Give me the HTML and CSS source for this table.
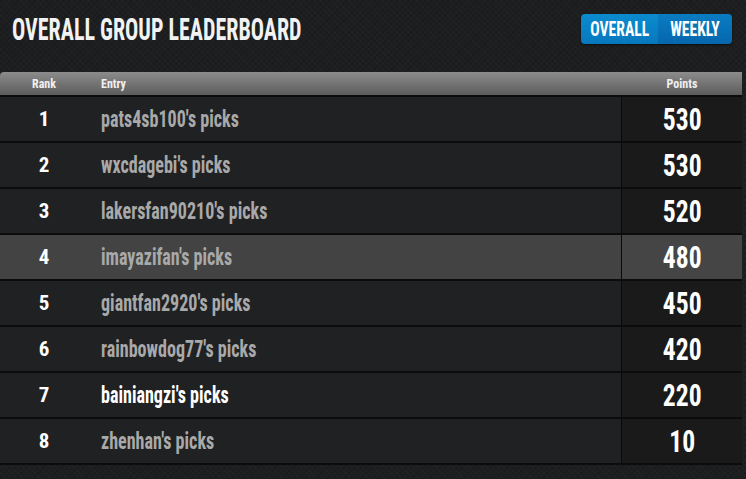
FILE: index.html
```html
<!DOCTYPE html>
<html>
<head>
<meta charset="utf-8">
<link rel="stylesheet" href="styles.css">
</head>
<body>
<div class="page">
  <header class="top">
    <h1 class="title"><span class="sq sq-title">OVERALL GROUP LEADERBOARD</span></h1>
    <div class="toggle">
      <span class="tab tab-on"><span class="sq sq-tab">OVERALL</span></span>
      <span class="tab tab-off"><span class="sq sq-tab">WEEKLY</span></span>
    </div>
  </header>
  <div class="board">
    <div class="row head">
      <div class="c-rank">Rank</div>
      <div class="c-entry">Entry</div>
      <div class="c-pts">Points</div>
    </div>
    <div class="row"><div class="c-rank">1</div><div class="c-entry"><span class="sq sq-name">pats4sb100's picks</span></div><div class="c-pts"><span class="sq sq-pts">530</span></div></div>
    <div class="row"><div class="c-rank">2</div><div class="c-entry"><span class="sq sq-name">wxcdagebi's picks</span></div><div class="c-pts"><span class="sq sq-pts">530</span></div></div>
    <div class="row"><div class="c-rank">3</div><div class="c-entry"><span class="sq sq-name">lakersfan90210's picks</span></div><div class="c-pts"><span class="sq sq-pts">520</span></div></div>
    <div class="row hl"><div class="c-rank">4</div><div class="c-entry"><span class="sq sq-name">imayazifan's picks</span></div><div class="c-pts"><span class="sq sq-pts">480</span></div></div>
    <div class="row"><div class="c-rank">5</div><div class="c-entry"><span class="sq sq-name">giantfan2920's picks</span></div><div class="c-pts"><span class="sq sq-pts">450</span></div></div>
    <div class="row"><div class="c-rank">6</div><div class="c-entry"><span class="sq sq-name">rainbowdog77's picks</span></div><div class="c-pts"><span class="sq sq-pts">420</span></div></div>
    <div class="row me"><div class="c-rank">7</div><div class="c-entry"><span class="sq sq-name">bainiangzi's picks</span></div><div class="c-pts"><span class="sq sq-pts">220</span></div></div>
    <div class="row"><div class="c-rank">8</div><div class="c-entry"><span class="sq sq-name">zhenhan's picks</span></div><div class="c-pts"><span class="sq sq-pts">10</span></div></div>
  </div>
</div>
</body>
</html>
```
FILE: styles.css
```css
html, body {
  margin: 0;
  padding: 0;
}
body {
  width: 746px;
  height: 479px;
  overflow: hidden;
  background-color: #1c1e20;
  background-image:
    repeating-linear-gradient(45deg, rgba(255,255,255,0.02) 0 1px, transparent 1px 4px),
    repeating-linear-gradient(-45deg, rgba(0,0,0,0.12) 0 1px, transparent 1px 4px);
  font-family: "Roboto Condensed", "Roboto", sans-serif;
  font-weight: bold;
  color: #fff;
}
.page {
  display: flex;
  flex-direction: column;
}
.sq {
  display: inline-block;
  white-space: nowrap;
}
.sq-title {
  transform: scaleX(0.71);
  transform-origin: 0 50%;
}
.sq-tab {
  transform: scaleX(0.8);
  transform-origin: 50% 50%;
}
.sq-name {
  transform: scaleX(0.785);
  transform-origin: 0 50%;
}
.sq-pts {
  transform: scaleX(0.8);
  transform-origin: 50% 50%;
}
.top {
  height: 72px;
  display: flex;
  justify-content: space-between;
  align-items: flex-start;
  padding: 0 14px 0 12px;
  box-sizing: border-box;
}
.title {
  margin: 14px 0 0;
  font-size: 31px;
  line-height: 32px;
  color: #f2f2f2;
  font-weight: bold;
  white-space: nowrap;
}
.toggle {
  margin-top: 14px;
  display: flex;
  height: 30px;
  border-radius: 4px;
  overflow: hidden;
  box-shadow: 0 1px 2px rgba(0,0,0,0.6);
}
.tab {
  display: flex;
  align-items: center;
  justify-content: center;
  font-size: 19.5px;
  color: #fff;
}
.tab-on {
  width: 77px;
  background: linear-gradient(#0b8ccf, #0777bd);
}
.tab-off {
  width: 74px;
  background: linear-gradient(#0a7cc2, #0667ad);
}
.board {
  width: 742px;
  display: flex;
  flex-direction: column;
}
.row {
  display: flex;
  height: 44px;
  border-bottom: 2px solid #0c0c0c;
  background: #202123;
  align-items: stretch;
}
.row > div {
  display: flex;
  align-items: center;
}
.c-rank {
  width: 88px;
  justify-content: center;
  font-size: 21px;
  color: #fff;
}
.c-entry {
  flex: 1;
  padding-left: 13px;
  font-size: 23px;
  color: #a9a9a9;
}
.c-pts {
  width: 120px;
  border-left: 1px solid #0a0a0a;
  background: #1a1a1a;
  justify-content: center;
  font-size: 32px;
  color: #fff;
}
.row.head {
  height: 23px;
  background: linear-gradient(#8c8c8c, #5c5c5c);
  border-radius: 4px 0 0 0;
}
.row.head > div {
  font-size: 12px;
  color: #f0f0f0;
}
.row.head .c-pts {
  background: transparent;
  border-left: none;
}
.row.hl {
  background: #434343;
}
.row.hl .c-pts {
  background: #454545;
}
.row.me .c-entry {
  color: #fff;
}
```
